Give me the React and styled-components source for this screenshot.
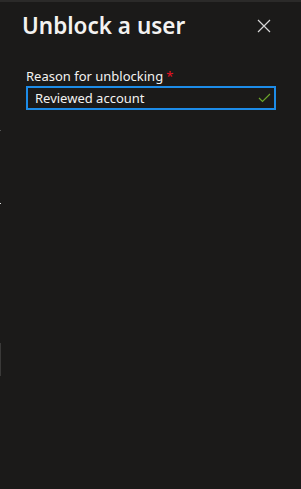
import React from 'react';
import styled, { createGlobalStyle } from 'styled-components';

const Global = createGlobalStyle`
  html, body {
    margin: 0;
    padding: 0;
    background: #1b1a19;
  }
  body {
    font-family: "Noto Sans", "Open Sans", "Liberation Sans", sans-serif;
    color: #f3f2f1;
  }
`;

const Panel = styled.div`
  position: relative;
  width: 301px;
  height: 489px;
  box-sizing: border-box;
  background: #1b1a19;
  border-top: 2px solid #2b2a29;
  overflow: hidden;
`;

const Header = styled.div`
  display: flex;
  align-items: center;
  justify-content: space-between;
  padding: 6px 24px 0 22px;
  height: 34px;
`;

const Title = styled.h1`
  margin: 0;
  font-size: 22.5px;
  font-weight: 600;
  letter-spacing: 0;
  color: #f3f2f1;
`;

const CloseButton = styled.button`
  display: flex;
  align-items: center;
  justify-content: center;
  width: 24px;
  height: 24px;
  padding: 0;
  margin-right: 1px;
  margin-top: 2px;
  border: none;
  background: transparent;
  cursor: pointer;
`;

const Body = styled.div`
  padding: 25px 25px 0 26px;
`;

const Label = styled.label`
  display: block;
  font-size: 13px;
  line-height: 18px;
  color: #f3f2f1;
  margin-bottom: 1px;
`;

const Required = styled.span`
  color: #e81123;
  margin-left: 3px;
`;

const InputBox = styled.div`
  display: flex;
  align-items: center;
  box-sizing: border-box;
  height: 24px;
  border: 2px solid #1d8ce8;
  padding: 0 3px 0 7px;
`;

const InputText = styled.span`
  flex: 1;
  font-size: 13px;
  color: #f3f2f1;
  line-height: 18px;
`;

const EdgeMark = styled.div`
  position: absolute;
  left: 0;
  width: 1px;
  background: ${p => p.$color};
`;

const CloseIcon = () => (
  <svg width="14" height="14" viewBox="0 0 14 14">
    <path d="M1 1 L13 13 M13 1 L1 13" stroke="#d6d6d6" strokeWidth="1.2" fill="none" />
  </svg>
);

const CheckIcon = () => (
  <svg width="13" height="10" viewBox="0 0 13 10">
    <path d="M1 5 L4.5 8.5 L12 1" stroke="#6ba52a" strokeWidth="1.2" fill="none" />
  </svg>
);

export default function App() {
  return (
    <>
      <Global />
      <Panel>
        <EdgeMark $color="#555" style={{ top: 128, height: 1 }} />
        <EdgeMark $color="#ddd" style={{ top: 201, height: 1 }} />
        <EdgeMark $color="#3a3938" style={{ top: 341, height: 33 }} />
        <Header>
          <Title>Unblock a user</Title>
          <CloseButton aria-label="Close">
            <CloseIcon />
          </CloseButton>
        </Header>
        <Body>
          <Label>
            Reason for unblocking<Required>*</Required>
          </Label>
          <InputBox>
            <InputText>Reviewed account</InputText>
            <CheckIcon />
          </InputBox>
        </Body>
      </Panel>
    </>
  );
}
